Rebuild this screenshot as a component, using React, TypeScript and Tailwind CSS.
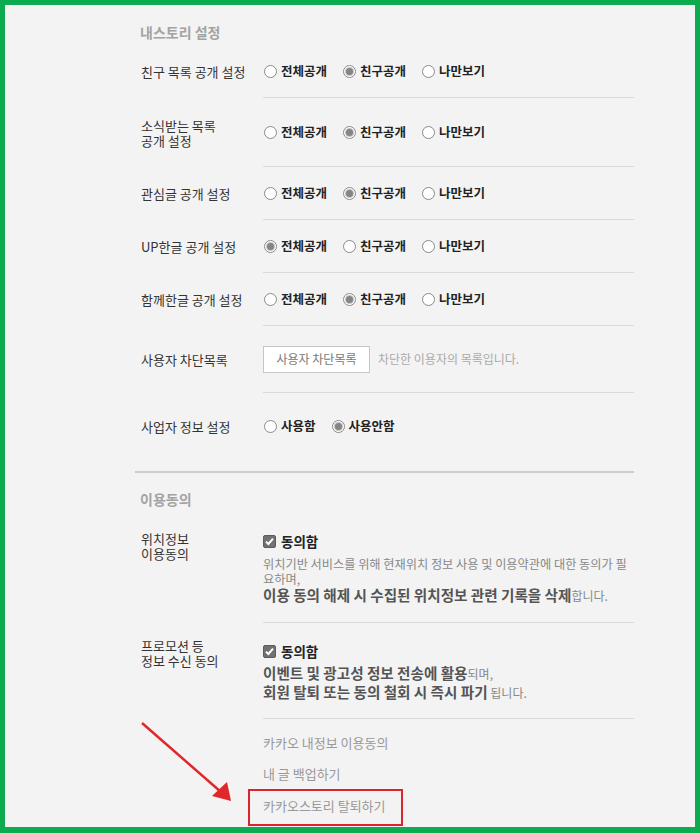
import type { ReactNode } from "react";

type Opt = { label: string; checked?: boolean };

function Radio({ label, checked }: Opt) {
  return (
    <label className="flex items-center gap-[4px]">
      <span className="ml-[1px] flex h-[13px] w-[13px] items-center justify-center rounded-full border border-[#8a8a8a] bg-white">
        {checked && (
          <span className="h-[7px] w-[7px] rounded-full bg-[#858585] ring-1 ring-[#c4c4c4]" />
        )}
      </span>
      <span className="text-[12.5px] font-bold leading-[20px] text-[#222]">{label}</span>
    </label>
  );
}

function RadioGroup({ options }: { options: Opt[] }) {
  return (
    <div className="flex items-center gap-[15px]">
      {options.map((o) => (
        <Radio key={o.label} {...o} />
      ))}
    </div>
  );
}

function Row({
  label,
  h,
  last,
  children,
}: {
  label: ReactNode;
  h: string;
  last?: boolean;
  children: ReactNode;
}) {
  return (
    <div className={`flex ${h}`}>
      <div className="flex w-[128px] items-center pl-[6px] text-[13px] leading-[15px] text-[#333]">
        {label}
      </div>
      <div
        className={`flex flex-1 items-center ${last ? "" : "border-b border-[#dadada]"}`}
      >
        {children}
      </div>
    </div>
  );
}

function CheckBox() {
  return (
    <svg width="13" height="13" viewBox="0 0 13 13">
      <rect x="0.5" y="0.5" width="12" height="12" rx="1.5" fill="#717171" stroke="#5c5c5c" />
      <path d="M3 6.6 L5.4 9 L10 3.6" fill="none" stroke="#fff" strokeWidth="2" />
    </svg>
  );
}

function Agree() {
  return (
    <div className="flex h-[20px] items-center gap-[5px]">
      <CheckBox />
      <span className="text-[13.5px] font-bold text-[#222]">동의함</span>
    </div>
  );
}

const visibility = (sel: number): Opt[] =>
  ["전체공개", "친구공개", "나만보기"].map((label, i) => ({ label, checked: i === sel }));

export default function App() {
  return (
    <div className="relative h-[833px] w-[700px] overflow-hidden border-[5px] border-b-[6px] border-[#0dab4f] bg-[#f3f3f3] font-['Noto_Sans_CJK_KR','Malgun_Gothic',sans-serif]">
      <div className="ml-[130px] w-[499px]">
        {/* 내스토리 설정 */}
        <section className="pt-[17px]">
          <h2 className="mb-[3px] h-[20px] pl-[5px] text-[14px] font-bold leading-[20px] text-[#a3a3a3]">
            내스토리 설정
          </h2>
          <Row label="친구 목록 공개 설정" h="h-[53px]">
            <RadioGroup options={visibility(1)} />
          </Row>
          <Row
            label={
              <span>
                소식받는 목록
                <br />
                공개 설정
              </span>
            }
            h="h-[69px]"
          >
            <RadioGroup options={visibility(1)} />
          </Row>
          <Row label="관심글 공개 설정" h="h-[53px]">
            <RadioGroup options={visibility(1)} />
          </Row>
          <Row label="UP한글 공개 설정" h="h-[53px]">
            <RadioGroup options={visibility(0)} />
          </Row>
          <Row label="함께한글 공개 설정" h="h-[53px]">
            <RadioGroup options={visibility(1)} />
          </Row>
          <Row label="사용자 차단목록" h="h-[67px]">
            <button className="h-[27px] w-[107px] border border-[#c6c6c6] bg-white text-[12px] text-[#777]">
              사용자 차단목록
            </button>
            <span className="ml-[8px] text-[12px] text-[#aaa]">차단한 이용자의 목록입니다.</span>
          </Row>
          <Row label="사업자 정보 설정" h="h-[66px]" last>
            <RadioGroup
              options={[
                { label: "사용함" },
                { label: "사용안함", checked: true },
              ]}
            />
          </Row>
        </section>

        {/* 이용동의 */}
        <section className="mt-[12px] border-t-2 border-[#cdcdcd] pt-[16px]">
          <h2 className="h-[20px] pl-[5px] text-[14px] font-bold leading-[20px] text-[#a3a3a3]">
            이용동의
          </h2>

          <div className="flex">
            <div className="w-[128px] pl-[6px] pt-[22px] text-[13px] leading-[15px] text-[#333]">
              위치정보
              <br />
              이용동의
            </div>
            <div className="flex-1 border-b border-[#dadada] pb-[18px] pt-[22px]">
              <Agree />
              <p className="mt-[6px] whitespace-nowrap text-[12.2px] leading-[15px] text-[#888]">
                위치기반 서비스를 위해 현재위치 정보 사용 및 이용약관에 대한 동의가 필
                <br />
                요하며,
              </p>
              <p className="whitespace-nowrap text-[12px] leading-[16px] text-[#888]">
                <b className="text-[14.6px] text-[#555]">
                  이용 동의 해제 시 수집된 위치정보 관련 기록을 삭제
                </b>
                합니다.
              </p>
            </div>
          </div>

          <div className="flex">
            <div className="w-[128px] pl-[6px] pt-[15px] text-[13px] leading-[15px] text-[#333]">
              프로모션 등
              <br />
              정보 수신 동의
            </div>
            <div className="flex-1 border-b border-[#dadada] pb-[16px] pt-[18px]">
              <Agree />
              <div className="mt-[3px] whitespace-nowrap text-[12px] leading-[18px] text-[#888]">
                <p>
                  <b className="text-[14.6px] text-[#555]">이벤트 및 광고성 정보 전송에 활용</b>
                  되며,
                </p>
                <p>
                  <b className="text-[14.6px] text-[#555]">회원 탈퇴 또는 동의 철회 시 즉시 파기</b>{" "}
                  됩니다.
                </p>
              </div>
            </div>
          </div>

          <ul className="pl-[128px] pt-[8px] text-[13px] text-[#999]">
            <li className="flex h-[31px] items-center">카카오 내정보 이용동의</li>
            <li className="flex h-[31px] items-center">내 글 백업하기</li>
            <li className="relative flex h-[33px] items-center pt-[1px]">
              카카오스토리 탈퇴하기
              <span className="absolute -left-[15px] top-0 h-[37px] w-[155px] border-2 border-[#d9262c]" />
            </li>
          </ul>
        </section>
      </div>

      {/* annotation arrow */}
      <svg
        className="pointer-events-none absolute -left-[5px] -top-[5px]"
        width="700"
        height="833"
        viewBox="0 0 700 833"
      >
        <line x1="142" y1="723" x2="221" y2="792" stroke="#e0282c" strokeWidth="2.5" />
        <polygon points="231,801 212,796 227,782" fill="#e0282c" />
      </svg>
    </div>
  );
}
